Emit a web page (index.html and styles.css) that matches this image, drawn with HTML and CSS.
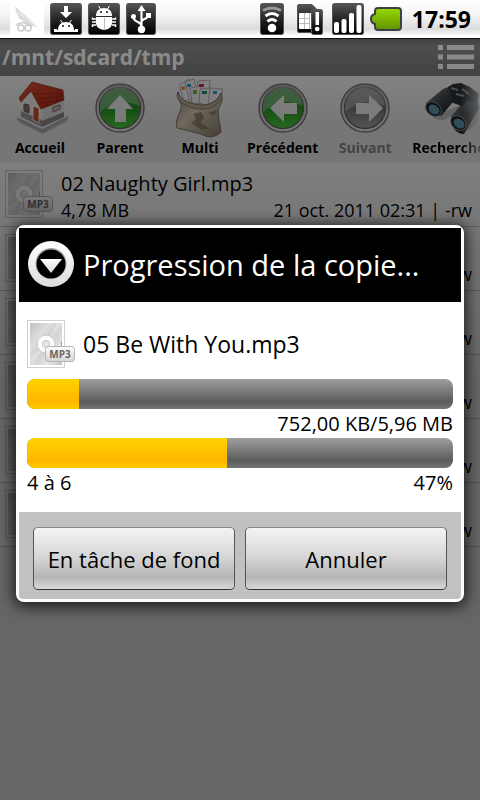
FILE: index.html
```html
<!DOCTYPE html>
<html lang="fr">
<head>
<meta charset="UTF-8">
<meta name="viewport" content="width=device-width, initial-scale=1.0">
<title>Progression de la copie</title>
<link rel="stylesheet" href="styles.css">
</head>
<body>
<svg class="defs" width="0" height="0" aria-hidden="true">
  <defs>
    <linearGradient id="dark" x1="0" y1="0" x2="0" y2="1">
      <stop offset="0" stop-color="#555"/><stop offset="0.6" stop-color="#1c1c1c"/><stop offset="1" stop-color="#000"/>
    </linearGradient>
    <linearGradient id="battery" x1="0" y1="0" x2="0" y2="1">
      <stop offset="0" stop-color="#96dc00"/><stop offset="1" stop-color="#639100"/>
    </linearGradient>
    <linearGradient id="green" x1="0" y1="0" x2="0" y2="1">
      <stop offset="0" stop-color="#3f8f3f"/><stop offset="0.5" stop-color="#279327"/><stop offset="1" stop-color="#4fd03c"/>
    </linearGradient>
    <linearGradient id="gray" x1="0" y1="0" x2="0" y2="1">
      <stop offset="0" stop-color="#888"/><stop offset="0.5" stop-color="#707070"/><stop offset="1" stop-color="#a8a8a8"/>
    </linearGradient>
    <linearGradient id="ring" x1="0" y1="0" x2="0" y2="1">
      <stop offset="0" stop-color="#aaa"/><stop offset="1" stop-color="#eee"/>
    </linearGradient>
    <linearGradient id="roof" x1="0" y1="0" x2="1" y2="1">
      <stop offset="0" stop-color="#e05038"/><stop offset="1" stop-color="#a82510"/>
    </linearGradient>
    <linearGradient id="sack" x1="0" y1="0" x2="1" y2="1">
      <stop offset="0" stop-color="#8d7f6a"/><stop offset="0.4" stop-color="#d8ccb8"/><stop offset="1" stop-color="#86775f"/>
    </linearGradient>
    <linearGradient id="tube" x1="0" y1="0" x2="1" y2="1">
      <stop offset="0" stop-color="#8b9399"/><stop offset="0.5" stop-color="#3d4449"/><stop offset="1" stop-color="#15191c"/>
    </linearGradient>
    <linearGradient id="cover" x1="0" y1="0" x2="1" y2="1">
      <stop offset="0" stop-color="#c0c0c0"/><stop offset="0.3" stop-color="#dedede"/><stop offset="0.5" stop-color="#cecece"/>
      <stop offset="0.75" stop-color="#e6e6e6"/><stop offset="1" stop-color="#c2c2c2"/>
    </linearGradient>
    <linearGradient id="tag" x1="0" y1="0" x2="0" y2="1">
      <stop offset="0" stop-color="#fff"/><stop offset="1" stop-color="#d4d4d4"/>
    </linearGradient>
    <linearGradient id="knob" x1="0" y1="0" x2="0" y2="1">
      <stop offset="0" stop-color="#fff"/><stop offset="1" stop-color="#dcdcdc"/>
    </linearGradient>
    <symbol id="mp3" viewBox="0 0 48 48">
      <rect x="0.5" y="0.5" width="37" height="47" fill="#fff" stroke="#d0d0d0"/>
      <rect x="3" y="3" width="32" height="42" fill="url(#cover)"/>
      <path d="M19 24L3 38v7h3zM19 24L35 6V3h-5z" fill="#fff" opacity="0.3"/>
      <circle cx="19" cy="24" r="9" fill="#fafafa" stroke="#ccc"/>
      <circle cx="19" cy="24" r="3.5" fill="#e6e6e6" stroke="#c8c8c8"/>
      <path d="M34.500 21v8" stroke="#aaa"/>
      <rect x="18.500" y="26.500" width="29" height="15" rx="3" fill="url(#tag)" stroke="#b4b4b4"/>
      <text x="33" y="38" text-anchor="middle" class="tag-text">MP3</text>
    </symbol>
  </defs>
</svg>

<header class="status-bar">
  <svg width="34" height="34" viewBox="0 0 34 34">
    <rect width="34" height="34" fill="#fff"/>
    <path d="M5 4c1 9 5 15 12 19l11 2z" fill="#dcdcdc"/>
    <path d="M8 10l18 14M7 15l12 8" stroke="#f4f4f4" fill="none"/>
    <g fill="none" stroke="#ccc" stroke-width="1.500"><circle cx="11" cy="26" r="3"/><circle cx="18" cy="26" r="3"/><path d="M6 23c5-3 11-3 16 2"/></g>
  </svg>
  <svg width="32" height="32" viewBox="0 0 32 32">
    <rect x="0.500" y="0.500" width="31" height="31" rx="2" fill="url(#dark)" stroke="#555"/>
    <path d="M14 3h4v6h4l-6 6-6-6h4z" fill="#fff"/>
    <path d="M8 27c0-5 3-8 8-8s8 3 8 8z" fill="#fff"/>
    <path d="M10.500 17l2 3M21.500 17l-2 3" stroke="#fff"/>
    <path d="M4 26h3v1h18v-1h3v3H4z" fill="#fff"/>
    <circle cx="13" cy="23" r="0.900"/><circle cx="19" cy="23" r="0.900"/>
  </svg>
  <svg width="32" height="32" viewBox="0 0 32 32">
    <rect x="0.500" y="0.500" width="31" height="31" rx="2" fill="url(#dark)" stroke="#555"/>
    <path d="M8 13c0-5 3-8 8-8s8 3 8 8z" fill="#fff"/>
    <path d="M10.500 3l2 3M21.500 3l-2 3" stroke="#fff"/>
    <circle cx="13" cy="9" r="0.900"/><circle cx="19" cy="9" r="0.900"/>
    <path d="M8 14h16v6c0 9-16 9-16 0z" fill="#fff"/>
    <path d="M16.500 15v11" stroke="#bbb"/>
    <path d="M8 16H4.500v-1.500M8 19H4M8 22H4.500v2M24 16h3.500v-1.500M24 19h4M24 22h3.500v2" fill="none" stroke="#fff" stroke-width="1.500"/>
  </svg>
  <svg width="30" height="32" viewBox="0 0 30 32">
    <rect x="0.500" y="0.500" width="29" height="31" rx="2" fill="url(#dark)" stroke="#555"/>
    <path d="M15.500 6v21M15.500 23c0-5-8-3-8-9M15.500 19c0-4 7-2 7-8" fill="none" stroke="#fff" stroke-width="2.200"/>
    <path d="M15.500 2l4 6h-8z" fill="#fff"/>
    <circle cx="7.500" cy="13.500" r="2.500" fill="#fff"/>
    <rect x="20" y="10" width="5" height="5" fill="#fff"/>
    <circle cx="15.500" cy="26.500" r="3.700" fill="#fff"/>
  </svg>
  <svg class="push" width="26" height="32" viewBox="0 0 26 32">
    <rect x="0.500" y="0.500" width="23" height="31" rx="2" fill="url(#dark)" stroke="#555"/>
    <g fill="none" stroke-width="3"><path d="M3 7.500q9-5 18 0" stroke="#999"/><path d="M5.500 13q6.500-5 13 0" stroke="#fff"/><path d="M7.500 18.500q4.500-4 9 0" stroke="#fff"/></g>
    <circle cx="12" cy="25" r="4.300" fill="#fff"/>
  </svg>
  <svg width="34" height="32" viewBox="0 0 34 32">
    <path d="M5.500 3q0-1.500 1.500-1.500h13l6 6V28q0 1.500-1.500 1.500H7q-1.500 0-1.500-1.500z" fill="url(#dark)" stroke="#555"/>
    <rect x="7" y="10" width="14" height="16" rx="1" fill="#fff"/>
    <path d="M7 15.500h5M7 20.500h5M12.500 10v16M17.500 10v16M12 15.500h6M12 20.500h6" stroke="#bbb"/>
    <rect x="19.500" y="6.500" width="11" height="25" rx="2" fill="url(#dark)" stroke="#555"/>
    <path d="M23.500 9h3.500v13h-3.500z" fill="#fff"/><circle cx="25.200" cy="26" r="2.300" fill="#fff"/>
  </svg>
  <svg width="32" height="32" viewBox="0 0 32 32">
    <rect x="0.500" y="0.500" width="31" height="31" rx="2" fill="url(#dark)" stroke="#555"/>
    <g fill="#fff"><rect x="2" y="19" width="5" height="11" rx="2"/><rect x="9.500" y="16" width="5" height="14" rx="2"/><rect x="17" y="10" width="5" height="20" rx="2"/><rect x="24.500" y="2" width="5" height="28" rx="2"/></g>
  </svg>
  <svg width="32" height="32" viewBox="0 0 32 32">
    <path d="M8 5h20q3 0 3 3v16q0 3-3 3H8q-3 0-3-3V21q-4-1-4-5t4-5V8q0-3 3-3z" fill="url(#battery)" stroke="#3c4148" stroke-width="2"/>
  </svg>
  <time class="clock">17:59</time>
</header>

<main class="screen">
  <div class="path-bar">
    <h1>/mnt/sdcard/tmp</h1>
    <button class="menu-button" aria-label="Menu">
      <svg width="36" height="24" viewBox="0 0 36 24" fill="#fff">
        <path d="M0 0h5v5H0zM9 0h27v5H9zM0 9.500h5v5H0zM9 9.500h27v5H9zM0 19h5v5H0zM9 19h27v5H9z"/>
      </svg>
    </button>
  </div>

  <nav class="toolbar">
    <button class="tool">
      <svg width="56" height="62" viewBox="0 0 56 62">
        <path d="M6 46l25 12 27-14-24-9z" fill="#888" opacity="0.4"/>
        <path d="M5 41L30 53l26-13v3L30 57 5 44z" fill="#aaa"/>
        <path d="M5 41L28 30l28 10-26 13z" fill="#e6e6e6"/>
        <path d="M9 22l11-7 10 15v22L9 41z" fill="#eee"/>
        <path d="M9 35l21 9v7L9 41z" fill="#999"/>
        <path d="M30 30l22-8v20L30 51z" fill="#dcdcdc"/>
        <path d="M30 45l22-9v5L30 51z" fill="#888"/>
        <path d="M7 22L20 6l31 8 1 10-23 9-10-18-10 11z" fill="url(#roof)" stroke="#8b2a1a" stroke-width="0.700"/>
        <path d="M22 18l28-1M25 23l26-3M27 28l24-5" stroke="#8b2010" stroke-width="0.600"/>
        <path d="M21 30l6 2v15l-6-3z" fill="#c8502c" stroke="#fff" stroke-width="0.800"/>
        <path d="M12 28l5 1v8l-5-2z" fill="#777" stroke="#9c4a4a"/>
        <path d="M41 31l7-2v4l-7 3z" fill="#bbb" stroke="#9c5555"/>
      </svg>
      <span>Accueil</span>
    </button>
    <button class="tool">
      <svg width="56" height="62" viewBox="0 0 56 62">
        <circle cx="28" cy="32" r="24" fill="url(#ring)" stroke="#777" stroke-width="1.500"/>
        <circle cx="28" cy="32" r="20.500" fill="url(#green)" stroke="#666" stroke-width="1.500"/>
        <path d="M8 32a20 20 0 0 1 40-2C32 23 22 25 8 36z" fill="#fff" opacity="0.300"/>
        <path d="M28 19l13 14h-7v13H23V33h-8z" fill="#eee"/>
      </svg>
      <span>Parent</span>
    </button>
    <button class="tool">
      <svg width="56" height="62" viewBox="0 0 56 62">
        <g stroke="#a79aa8" stroke-width="0.800" fill="#f2f0f5">
          <path d="M7 9l10-6 6 19-11 3z"/><path d="M13 6l9-3 5 20-9 3z"/><path d="M26 5l12-1-1 20-13-2z"/><path d="M18 12l11-2 3 18-12-1z"/><path d="M28 13l11-1-1 18-11-3z"/><path d="M38 12l13 1-4 18-11-2z"/>
        </g>
        <path d="M9 11l4-1v3l-3 1z" fill="#d98a2c"/><path d="M15 8h4v3h-4zM41 15h4v3h-4z" fill="#2b9bd0"/><path d="M27 8h5v3h-5z" fill="#c92a3c"/><path d="M21 14h4v4h-4z" fill="#70b62d"/><path d="M30 15h5v3h-5z" fill="#2b8f66"/>
        <path d="M6 16c-2 8 5 10 3 17-3 8-6 12-4 19 7 2 20 4 31 9 5 0 9-1 13-5-1-11-4-17-2-25 3-4 4-8 2-14-3 8-13 14-22 12C17 28 8 25 6 16z" fill="url(#sack)" stroke="#6c604e" stroke-width="0.800"/>
        <path d="M6 16c2 8 10 11 21 13 10 1 19-4 22-12l1 4c-5 9-12 13-24 12C15 31 7 27 5 20z" fill="#b8ab94" stroke="#695e4e" stroke-width="0.700"/>
        <path d="M21 38l8-2 3 5-3 6 9 6-8 1-11-7 5-4zM36 37l9-3-3 6z" fill="#74664f" opacity="0.650"/>
      </svg>
      <span>Multi</span>
    </button>
    <button class="tool">
      <svg width="56" height="62" viewBox="0 0 56 62">
        <circle cx="28" cy="32" r="24" fill="url(#ring)" stroke="#777" stroke-width="1.500"/>
        <circle cx="28" cy="32" r="20.500" fill="url(#green)" stroke="#666" stroke-width="1.500"/>
        <path d="M8 32a20 20 0 0 1 40-2C32 23 22 25 8 36z" fill="#fff" opacity="0.300"/>
        <path d="M15 32l14-13v8h13v11H29v8z" fill="#eee"/>
      </svg>
      <span>Précédent</span>
    </button>
    <button class="tool" disabled>
      <svg width="56" height="62" viewBox="0 0 56 62">
        <circle cx="28" cy="32" r="24" fill="url(#ring)" stroke="#777" stroke-width="1.500"/>
        <circle cx="28" cy="32" r="20.500" fill="url(#gray)" stroke="#666" stroke-width="1.500"/>
        <path d="M8 32a20 20 0 0 1 40-2C32 23 22 25 8 36z" fill="#fff" opacity="0.300"/>
        <path d="M46 32L32 19v8H19v11h13v8z" fill="#eee"/>
      </svg>
      <span>Suivant</span>
    </button>
    <button class="tool">
      <svg width="56" height="62" viewBox="0 0 56 62">
        <path d="M7 40c8 6 14 5 20 0l8 14c8 3 16-3 19-10l1-21z" fill="#777" opacity="0.400"/>
        <path d="M2 27L19 13l8-3 6 6-4 10-11 13c-5 4-16-4-16-12z" fill="url(#tube)"/>
        <path d="M27 41l11-14 6-8 9 4 2 9-9 16-6 10c-7 1-14-8-13-17z" fill="url(#tube)"/>
        <path d="M24 11l5-3 8-1 9 4 9 7-2 8-10-2-5 6-9-3-2-9z" fill="#2a3034"/>
        <path d="M27 12l7 2M32 18l8 2M38 13l7 5" stroke="#8b9298" stroke-width="2"/>
        <ellipse cx="9.500" cy="33" rx="8.500" ry="6.500" transform="rotate(38 9.500 33)" fill="#171b1e" stroke="#838a90"/>
        <ellipse cx="10" cy="33.500" rx="6" ry="4.500" transform="rotate(38 10 33.500)" fill="#5b97ab"/>
        <ellipse cx="34.500" cy="47" rx="8.500" ry="6.500" transform="rotate(38 34.500 47)" fill="#171b1e" stroke="#838a90"/>
        <ellipse cx="35" cy="47.500" rx="6" ry="4.500" transform="rotate(38 35 47.500)" fill="#5b97ab"/>
      </svg>
      <span>Rechercher</span>
    </button>
  </nav>

  <ul class="files">
    <li class="file">
      <svg width="48" height="48"><use href="#mp3"/></svg>
      <div class="file-info">
        <div class="file-name">02 Naughty Girl.mp3</div>
        <div class="file-meta"><span>4,78 MB</span><span>21 oct. 2011 02:31 | -rw</span></div>
      </div>
    </li>
    <li class="file"><svg width="48" height="48"><use href="#mp3"/></svg><div class="file-info"><div class="file-meta"><span>-rw</span></div></div></li>
    <li class="file"><svg width="48" height="48"><use href="#mp3"/></svg><div class="file-info"><div class="file-meta"><span>-rw</span></div></div></li>
    <li class="file"><svg width="48" height="48"><use href="#mp3"/></svg><div class="file-info"><div class="file-meta"><span>-rw</span></div></div></li>
    <li class="file"><svg width="48" height="48"><use href="#mp3"/></svg><div class="file-info"><div class="file-meta"><span>-rw</span></div></div></li>
    <li class="file"><svg width="48" height="48"><use href="#mp3"/></svg><div class="file-info"><div class="file-meta"><span>-rw</span></div></div></li>
  </ul>

  <div class="overlay">
    <section class="dialog" role="dialog" aria-labelledby="dialog-title">
      <div class="dialog-header">
        <svg width="48" height="48" viewBox="0 0 48 48">
          <circle cx="24" cy="24" r="23" fill="url(#knob)"/>
          <circle cx="24" cy="23.500" r="15.500" fill="#aaa"/>
          <circle cx="24" cy="24" r="14.500" fill="#000"/>
          <path d="M13 19h22L24 33z" fill="url(#knob)"/>
        </svg>
        <h2 id="dialog-title">Progression de la copie...</h2>
      </div>
      <div class="dialog-body">
        <div class="current">
          <svg width="48" height="48"><use href="#mp3"/></svg>
          <label for="file-progress">05 Be With You.mp3</label>
        </div>
        <progress id="file-progress" value="752" max="6103"></progress>
        <div class="figures"><span></span><span>752,00 KB/5,96 MB</span></div>
        <progress id="total-progress" value="47" max="100"></progress>
        <div class="figures"><label for="total-progress">4 à 6</label><span>47%</span></div>
      </div>
      <div class="dialog-buttons">
        <button>En tâche de fond</button>
        <button>Annuler</button>
      </div>
    </section>
  </div>
</main>
</body>
</html>
```

FILE: styles.css
```css
* {
  box-sizing: border-box;
}
body {
  margin: 0;
  min-height: 100vh;
  display: flex;
  flex-direction: column;
  font-family: "Open Sans", "Noto Sans", sans-serif;
  color: #000;
  background: #fff;
}
svg {
  display: block;
  flex: none;
}
button {
  font-family: inherit;
  color: inherit;
}
h1, h2 {
  margin: 0;
}
.defs {
  position: absolute;
}
.tag-text {
  font-size: 10px;
  font-weight: bold;
  fill: #666;
}

/* Status bar */
.status-bar {
  display: flex;
  align-items: center;
  gap: 6px;
  height: 39px;
  padding: 0 9px 0 10px;
  border-bottom: 1px solid #111;
  background: linear-gradient(#fff, #f4f4f4 40%, #dcdcdc 76%, #fff 95%);
}
.push {
  margin-left: auto;
}
.clock {
  margin-left: 4px;
  font-size: 23px;
  font-weight: bold;
}

/* File browser */
.screen {
  position: relative;
  flex: 1;
  overflow: hidden;
}
.path-bar {
  display: flex;
  align-items: center;
  justify-content: space-between;
  height: 37px;
  padding: 0 6px 2px 2px;
  color: #fff;
  background: linear-gradient(#747474, #8e8e8e 20%, #7c7c7c);
}
.path-bar h1 {
  font-size: 21px;
  line-height: 34px;
}
.menu-button {
  padding: 0;
  border: 0;
  background: none;
}
.toolbar {
  display: flex;
  overflow: hidden;
  padding-bottom: 5px;
  background: linear-gradient(#f4f4f4, #e6e6e6 60%, #f0f0f0);
}
.tool {
  display: flex;
  flex: none;
  flex-direction: column;
  align-items: center;
  min-width: 80px;
  padding: 0 7px;
  border: 0;
  background: none;
  font-size: 14px;
  font-weight: bold;
  line-height: 20px;
}
.tool:last-child {
  -webkit-mask-image: linear-gradient(to right, #000 60%, rgba(0, 0, 0, 0.1) 85%);
}
.tool:disabled {
  color: #888;
}
.files {
  margin: 0;
  padding: 0;
  list-style: none;
}
.file {
  display: flex;
  gap: 8px;
  height: 64px;
  padding: 7px 8px 0 5px;
  border-bottom: 1px solid #ccc;
}
.file-info {
  display: flex;
  flex: 1;
  flex-direction: column;
  justify-content: flex-end;
  padding-bottom: 4px;
}
.file-name {
  font-size: 20px;
  line-height: 28px;
}
.file-meta {
  display: flex;
  justify-content: space-between;
  font-size: 18px;
  line-height: 24px;
}
.file-meta span:last-child {
  margin-left: auto;
}

/* Copy dialog */
.overlay {
  position: absolute;
  inset: 0;
  display: flex;
  align-items: center;
  padding: 0 16px 12px;
  background: linear-gradient(rgba(0, 0, 0, 0.45), rgba(0, 0, 0, 0.5) 15%, rgba(0, 0, 0, 0.6) 45%);
}
.dialog {
  flex: 1;
  border: 3px solid #fff;
  border-radius: 8px;
  background: #fff;
  box-shadow: 0 2px 14px 3px rgba(0, 0, 0, 0.7);
}
.dialog-header {
  display: flex;
  align-items: center;
  gap: 8px;
  height: 74px;
  padding: 0 8px 2px;
  color: #fff;
  background: #000;
}
.dialog-header h2 {
  font-size: 29px;
  font-weight: normal;
}
.dialog-body {
  padding: 18px 8px 15px;
  font-size: 20px;
}
.current {
  display: flex;
  align-items: center;
  gap: 8px;
  margin-bottom: 11px;
  font-size: 23px;
}
progress {
  -webkit-appearance: none;
  appearance: none;
  display: block;
  width: 100%;
  height: 30px;
  border-radius: 8px;
  overflow: hidden;
}
progress::-webkit-progress-bar {
  background: linear-gradient(#9d9e9d, #5a5d5a 75%, #747674);
}
progress::-webkit-progress-value {
  background: linear-gradient(#ffd300, #ffb600 75%, #ffcb00);
}
.figures {
  display: flex;
  justify-content: space-between;
  line-height: 29px;
}
.dialog-buttons {
  display: flex;
  gap: 10px;
  padding: 15px 14px 9px;
  border-radius: 0 0 4px 4px;
  background: #c1c1c1;
}
.dialog-buttons button {
  flex: 1;
  height: 63px;
  padding: 0;
  border: 1px solid #555;
  border-top-color: #888;
  border-bottom-color: #333;
  border-radius: 5px;
  font-size: 22px;
  background: linear-gradient(#f4f4f4, #d4d4d4 50%, #b5b5b5 80%, #d8d8d8);
}
```
